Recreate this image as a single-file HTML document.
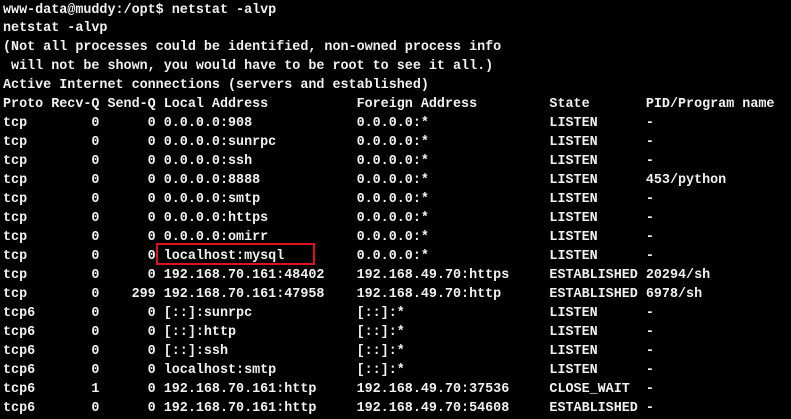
<!DOCTYPE html>
<html><head><meta charset="utf-8"><style>
html,body{margin:0;padding:0;background:#000;width:791px;height:419px;overflow:hidden}
pre{position:absolute;left:3px;top:1.5px;margin:0;font-family:"Liberation Mono",monospace;font-weight:bold;font-size:13.4px;line-height:18.95px;color:#f2f2f2;white-space:pre}
.box{position:absolute;left:156px;top:243px;width:155px;height:18px;border:2px solid #e0101e}
</style></head><body>
<pre>www-data@muddy:/opt$ netstat -alvp
netstat -alvp
(Not all processes could be identified, non-owned process info
 will not be shown, you would have to be root to see it all.)
Active Internet connections (servers and established)
Proto Recv-Q Send-Q Local Address           Foreign Address         State       PID/Program name
tcp        0      0 0.0.0.0:908             0.0.0.0:*               LISTEN      -
tcp        0      0 0.0.0.0:sunrpc          0.0.0.0:*               LISTEN      -
tcp        0      0 0.0.0.0:ssh             0.0.0.0:*               LISTEN      -
tcp        0      0 0.0.0.0:8888            0.0.0.0:*               LISTEN      453/python
tcp        0      0 0.0.0.0:smtp            0.0.0.0:*               LISTEN      -
tcp        0      0 0.0.0.0:https           0.0.0.0:*               LISTEN      -
tcp        0      0 0.0.0.0:omirr           0.0.0.0:*               LISTEN      -
tcp        0      0 localhost:mysql         0.0.0.0:*               LISTEN      -
tcp        0      0 192.168.70.161:48402    192.168.49.70:https     ESTABLISHED 20294/sh
tcp        0    299 192.168.70.161:47958    192.168.49.70:http      ESTABLISHED 6978/sh
tcp6       0      0 [::]:sunrpc             [::]:*                  LISTEN      -
tcp6       0      0 [::]:http               [::]:*                  LISTEN      -
tcp6       0      0 [::]:ssh                [::]:*                  LISTEN      -
tcp6       0      0 localhost:smtp          [::]:*                  LISTEN      -
tcp6       1      0 192.168.70.161:http     192.168.49.70:37536     CLOSE_WAIT  -
tcp6       0      0 192.168.70.161:http     192.168.49.70:54608     ESTABLISHED -</pre>
<div class="box"></div>
</body></html>
